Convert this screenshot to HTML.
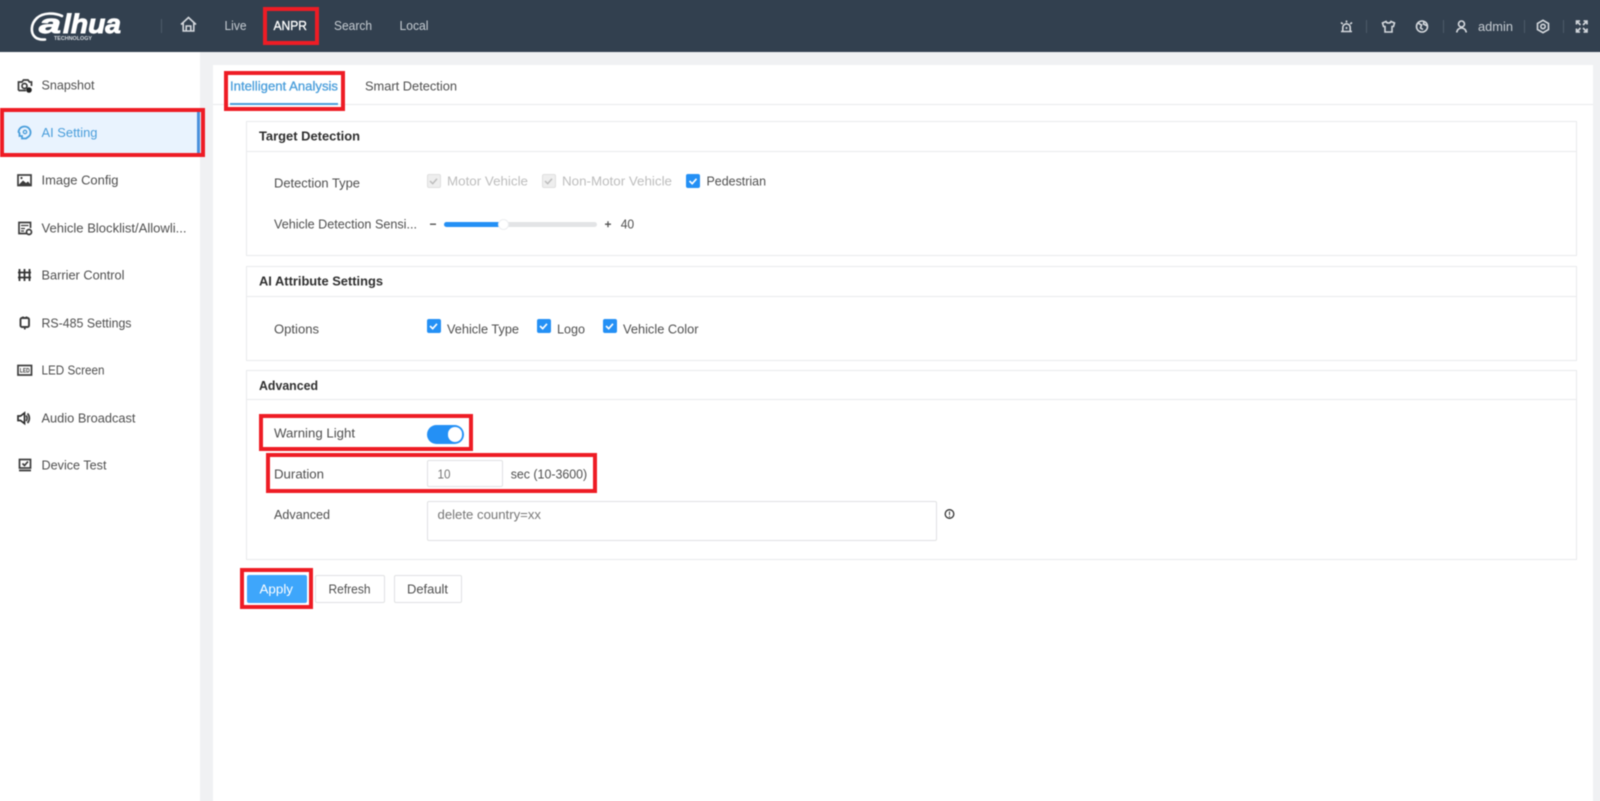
<!DOCTYPE html>
<html lang="en"><head><meta charset="utf-8"><title>ANPR - AI Setting</title>
<style>
html,body{margin:0;padding:0;width:1600px;height:801px;overflow:hidden;background:#fff}
#wrap{position:absolute;left:0;top:0;width:1600px;height:801px;overflow:hidden;contain:paint}
#root{position:absolute;left:-10px;top:-10px;width:1620px;height:821px;overflow:hidden;filter:blur(.5px);background:#f0f1f3}
#c{position:absolute;left:10px;top:10px;width:1600px;height:801px}
.b{position:absolute;box-sizing:border-box}
.panel{background:#fff;border:1px solid #e9ebed}
.line{background:#e9ebed;height:1px}
.red{border:4.500px solid #ee1c25}
.btn{background:#fff;border:1px solid #e0e1e3;border-radius:2px}
svg.o{position:absolute;left:0;top:0}
text{font-family:"Liberation Sans",sans-serif;font-size:13px;fill:#4f4f4f}
.n{fill:#c6ccd2}
.h{font-weight:700;fill:#2f2f2f;font-size:12.500px}
.d{fill:#bdbdbd}
.s{fill:none;stroke:#3c3c3c;stroke-width:1.700}
.w{fill:none;stroke:#d4d8dd;stroke-width:1.600}
.lg{font-weight:700;font-style:italic;fill:#fff;stroke:#fff;stroke-width:.9;font-size:27px}
</style></head><body>
<div id="wrap"><div id="root"><div id="c">
<div class="b" style="left:-10px;top:-10px;width:1620px;height:62px;background:#32404f"></div>
<div class="b" style="left:-10px;top:52px;width:210px;height:759px;background:#fff"></div>
<div class="b" style="left:213px;top:65px;width:1380px;height:746px;background:#fff"></div>
<div class="b line" style="left:213px;top:104px;width:1380px"></div>

<div class="b" style="left:0;top:112px;width:199px;height:42px;background:#e9f3fe"></div>
<div class="b" style="left:197px;top:112px;width:2.500px;height:42px;background:#4a90dc"></div>

<div class="b panel" style="left:246px;top:121px;width:1331px;height:135px"></div>
<div class="b line" style="left:247px;top:151px;width:1329px"></div>
<div class="b panel" style="left:246px;top:266px;width:1331px;height:95px"></div>
<div class="b line" style="left:247px;top:296px;width:1329px"></div>
<div class="b panel" style="left:246px;top:370px;width:1331px;height:190px"></div>
<div class="b line" style="left:247px;top:399px;width:1329px"></div>

<!-- slider -->
<div class="b" style="left:444px;top:222px;width:153px;height:5px;background:#e3e4e6;border-radius:3px"></div>
<div class="b" style="left:444px;top:222px;width:60px;height:5px;background:#2490f5;border-radius:3px"></div>
<div class="b" style="left:498px;top:218.500px;width:11px;height:11px;background:#fff;border-radius:50%;border:1px solid #eceef0"></div>

<!-- checkboxes -->
<div class="b" style="left:426.500px;top:174px;width:14px;height:14px;background:#eeeeee;border:1px solid #e0e0e0;border-radius:2px"></div>
<div class="b" style="left:541.500px;top:174px;width:14px;height:14px;background:#eeeeee;border:1px solid #e0e0e0;border-radius:2px"></div>
<div class="b" style="left:686px;top:174px;width:14px;height:14px;background:#2490f5;border-radius:2px"></div>
<div class="b" style="left:426.500px;top:319px;width:14px;height:14px;background:#2490f5;border-radius:2px"></div>
<div class="b" style="left:536.500px;top:319px;width:14px;height:14px;background:#2490f5;border-radius:2px"></div>
<div class="b" style="left:602.500px;top:319px;width:14px;height:14px;background:#2490f5;border-radius:2px"></div>

<!-- toggle -->
<div class="b" style="left:427px;top:425px;width:37px;height:18.500px;background:#2490f5;border-radius:10px"></div>
<div class="b" style="left:447.500px;top:427px;width:14.500px;height:14.500px;background:#fff;border-radius:50%"></div>

<!-- inputs -->
<div class="b" style="left:426.500px;top:460px;width:76.500px;height:27px;background:#fff;border:1px solid #e0e1e3;border-radius:2px"></div>
<div class="b" style="left:426.500px;top:500.500px;width:510px;height:40px;background:#fff;border:1px solid #e0e1e3;border-radius:2px"></div>

<!-- buttons -->
<div class="b" style="left:246.500px;top:575px;width:60px;height:27.500px;background:#3ea6fb;border-radius:2px"></div>
<div class="b btn" style="left:315px;top:575px;width:69.500px;height:27.500px"></div>
<div class="b btn" style="left:393.500px;top:575px;width:68px;height:27.500px"></div>

<!-- red highlight boxes -->
<div class="b red" style="left:263px;top:7px;width:56px;height:38px"></div>
<div class="b red" style="left:223.500px;top:71px;width:121.500px;height:40px"></div>
<div class="b red" style="left:0;top:108px;width:205px;height:49px"></div>
<div class="b red" style="left:259px;top:414px;width:214px;height:37px"></div>
<div class="b red" style="left:266px;top:453px;width:331px;height:40px"></div>
<div class="b red" style="left:240px;top:568px;width:73px;height:41px"></div>

<svg class="o" width="1600" height="801" viewBox="0 0 1600 801">
<!-- logo -->
<path d="M62 16C54 12.500 43 12.500 37 18 30.500 24 30.500 33 35 37 37.500 39.300 41 39.800 45 39.500" fill="none" stroke="#fff" stroke-width="2.600" stroke-linecap="round"/>
<text class="lg" x="39" y="33" textLength="22" lengthAdjust="spacingAndGlyphs">a</text>
<text class="lg" x="63" y="33" textLength="58" lengthAdjust="spacingAndGlyphs">lhua</text>
<text x="54" y="40" textLength="38" lengthAdjust="spacingAndGlyphs" style="font-size:5px;font-weight:700;fill:#d8dce0">TECHNOLOGY</text>

<rect x="161" y="19" width="1" height="14" fill="#4c5a68"/>
<path class="w" d="M181 24.500 188.500 17.500 196 24.500M183.200 23V31H193.800V23M186.200 31V26H190.800V31"/>
<text class="n" x="224.500" y="30" textLength="22" lengthAdjust="spacingAndGlyphs">Live</text>
<text x="273.500" y="30" textLength="33.500" lengthAdjust="spacingAndGlyphs" style="fill:#fff;stroke:#fff;stroke-width:.3">ANPR</text>
<text class="n" x="334" y="30" textLength="38" lengthAdjust="spacingAndGlyphs">Search</text>
<text class="n" x="399.500" y="30" textLength="29" lengthAdjust="spacingAndGlyphs">Local</text>

<!-- header right -->
<path class="w" d="M1341 31.500H1352M1342.800 31.500V27.500a3.700 3.700 0 0 1 7.400 0V31.500M1346.500 20.500V22.500M1341 22.500 1342.800 24M1352 22.500 1350.200 24M1346.500 27V29"/>
<rect x="1366" y="20" width="1" height="13" fill="#4c5a68"/>
<path class="w" d="M1386 21.500 1382.500 23 1383.500 26.500H1385V32H1392V26.500H1393.500L1394.500 23 1391 21.500C1390.500 23.500 1386.500 23.500 1386 21.500Z"/>
<circle class="w" cx="1422" cy="26.500" r="5.500"/>
<path class="w" d="M1418 23 1421.500 25 1420.500 28 1423 29.500M1424 21.500 1423.500 24 1427.500 26"/>
<rect x="1443" y="20" width="1" height="13" fill="#4c5a68"/>
<circle class="w" cx="1461.500" cy="24" r="3"/>
<path class="w" d="M1456.800 32.500c.4-6 9-6 9.400 0"/>
<text class="n" x="1478" y="31" textLength="35" lengthAdjust="spacingAndGlyphs">admin</text>
<rect x="1524" y="20" width="1" height="13" fill="#4c5a68"/>
<path class="w" d="M1543 20.300 1548.500 23.500V29.500L1543 32.700 1537.500 29.500V23.500Z"/>
<circle class="w" cx="1543" cy="26.500" r="2.200"/>
<rect x="1563" y="20" width="1" height="13" fill="#4c5a68"/>
<path class="w" d="M1576.500 24.500V21H1580M1577 21.500 1580.500 25M1587 24.500V21H1583.500M1586.500 21.500 1583 25M1576.500 28.500V32H1580M1577 31.500 1580.500 28M1587 28.500V32H1583.500M1586.500 31.500 1583 28"/>

<!-- tabs -->
<text x="230" y="90.300" textLength="108" lengthAdjust="spacingAndGlyphs" style="fill:#4a9edb;stroke:#4a9edb;stroke-width:.3">Intelligent Analysis</text>
<rect x="230" y="103" width="108" height="2" fill="#4a9edb"/>
<text x="365" y="90.300" textLength="92" lengthAdjust="spacingAndGlyphs">Smart Detection</text>

<!-- sidebar icons -->
<path class="s" d="M18.500 90.500V82H22L23.500 80H28L29.500 82H31.500V86M18.500 90.500H26"/>
<circle class="s" cx="24.500" cy="86" r="2.500"/>
<circle cx="29" cy="90" r="2.800" fill="#222"/>
<path d="M24.500 126.500a6 6 0 0 1 5.500 8.500c-1 2-3 2.500-4 3.500H22V136h-2.500v-3l-1-1c.2-3 2.500-5.500 6-5.500Z" fill="none" stroke="#4a9edb" stroke-width="1.800"/>
<circle cx="25" cy="132" r="1.700" fill="none" stroke="#4a9edb" stroke-width="1.300"/>
<rect class="s" x="18" y="175" width="13" height="10.500"/>
<path d="M18.500 185 23 180.500 26 183 28 181.500 31 185Z" fill="#3c3c3c"/>
<circle cx="21.500" cy="178" r="1.100" fill="#3c3c3c"/>
<path class="s" d="M27 233.500H19V222.500H30.500V228" />
<path d="M21 225.500H28.500M21 228.500H25M21 231H24" fill="none" stroke="#3c3c3c" stroke-width="1.200"/>
<circle class="s" cx="29" cy="232" r="2.500"/>
<path d="M19.500 269v12M24.500 269v12M29.500 269v12M18 272.500H31M18 277.500H31" fill="none" stroke="#333" stroke-width="1.800"/>
<rect class="s" x="20.500" y="318" width="8.500" height="9" rx="1.500" style="stroke-width:1.900"/>
<path class="s" d="M23 316.500V318M26.500 316.500V318M24.800 327V329.500"/>
<rect class="s" x="18" y="365.500" width="13.500" height="9.500"/>
<text x="19.800" y="372.500" textLength="10" lengthAdjust="spacingAndGlyphs" style="font-size:6px;font-weight:700;fill:#3c3c3c">LED</text>
<path d="M18 416H20.500L24.500 413V423.500L20.500 420.500H18Z" fill="none" stroke="#2e2e2e" stroke-width="1.700"/>
<path class="s" d="M26 415.500a4 4 0 0 1 0 5.500M27.500 413.500a7 7 0 0 1 0 9.500"/>
<rect class="s" x="19.500" y="459.500" width="11" height="8.500"/>
<path class="s" d="M22.500 463.500 24.500 465.500 28 461.500M19 470.500H31"/>

<!-- sidebar text -->
<text x="41.500" y="89.500" textLength="53" lengthAdjust="spacingAndGlyphs">Snapshot</text>
<text x="41.500" y="137" textLength="56" lengthAdjust="spacingAndGlyphs" style="fill:#4a9edb">AI Setting</text>
<text x="41.500" y="184.500" textLength="77" lengthAdjust="spacingAndGlyphs">Image Config</text>
<text x="41.500" y="232.500" textLength="145" lengthAdjust="spacingAndGlyphs">Vehicle Blocklist/Allowli...</text>
<text x="41.500" y="279.500" textLength="83" lengthAdjust="spacingAndGlyphs">Barrier Control</text>
<text x="41.500" y="327.500" textLength="90" lengthAdjust="spacingAndGlyphs">RS-485 Settings</text>
<text x="41.500" y="374.500" textLength="63" lengthAdjust="spacingAndGlyphs">LED Screen</text>
<text x="41.500" y="422.500" textLength="94" lengthAdjust="spacingAndGlyphs">Audio Broadcast</text>
<text x="41.500" y="469.500" textLength="65" lengthAdjust="spacingAndGlyphs">Device Test</text>

<!-- headings -->
<text class="h" x="259" y="140.500" textLength="101" lengthAdjust="spacingAndGlyphs">Target Detection</text>
<text class="h" x="259" y="285.500" textLength="124" lengthAdjust="spacingAndGlyphs">AI Attribute Settings</text>
<text class="h" x="259" y="390" textLength="59" lengthAdjust="spacingAndGlyphs">Advanced</text>

<!-- form text -->
<text x="274" y="187.500" textLength="86" lengthAdjust="spacingAndGlyphs">Detection Type</text>
<text class="d" x="447" y="185.500" textLength="81" lengthAdjust="spacingAndGlyphs">Motor Vehicle</text>
<text class="d" x="562" y="185.500" textLength="110" lengthAdjust="spacingAndGlyphs">Non-Motor Vehicle</text>
<text x="706.500" y="185.500" textLength="59.500" lengthAdjust="spacingAndGlyphs">Pedestrian</text>
<path d="M430 181 432.700 183.700 437 178.800M545 181 547.700 183.700 552 178.800" fill="none" stroke="#bdbdbd" stroke-width="1.500"/>
<path d="M689.500 181 692.200 183.700 696.500 178.800M430 326 432.700 328.700 437 323.800M540 326 542.700 328.700 547 323.800M606 326 608.700 328.700 613 323.800" fill="none" stroke="#fff" stroke-width="1.600"/>
<text x="274" y="228.500" textLength="143" lengthAdjust="spacingAndGlyphs">Vehicle Detection Sensi...</text>
<rect x="430" y="223.500" width="6" height="1.400" fill="#555"/>
<path d="M605 224.200H611M608 221.200V227.200" stroke="#555" stroke-width="1.300"/>
<text x="620.700" y="228.500" textLength="13.500" lengthAdjust="spacingAndGlyphs">40</text>
<text x="274" y="333.500" textLength="45" lengthAdjust="spacingAndGlyphs">Options</text>
<text x="447" y="333.500" textLength="72" lengthAdjust="spacingAndGlyphs">Vehicle Type</text>
<text x="557" y="333.500" textLength="28" lengthAdjust="spacingAndGlyphs">Logo</text>
<text x="623" y="333.500" textLength="75.500" lengthAdjust="spacingAndGlyphs">Vehicle Color</text>
<text x="274" y="437.500" textLength="81" lengthAdjust="spacingAndGlyphs">Warning Light</text>
<text x="274" y="478.500" textLength="50" lengthAdjust="spacingAndGlyphs">Duration</text>
<text x="437.500" y="478.500" textLength="13" lengthAdjust="spacingAndGlyphs" style="fill:#777">10</text>
<text x="510.700" y="478.500" textLength="76.500" lengthAdjust="spacingAndGlyphs">sec (10-3600)</text>
<text x="274" y="519" textLength="56" lengthAdjust="spacingAndGlyphs">Advanced</text>
<text x="437.500" y="519" textLength="103.500" lengthAdjust="spacingAndGlyphs" style="fill:#777">delete country=xx</text>
<circle cx="949.500" cy="514" r="4.300" fill="none" stroke="#333" stroke-width="1.300"/>
<path d="M949.500 511.500V515M949.500 516V517" stroke="#333" stroke-width="1"/>

<text x="259.500" y="593.500" textLength="33.500" lengthAdjust="spacingAndGlyphs" style="fill:#fff;font-size:12.500px">Apply</text>
<text x="328.500" y="593.500" textLength="42" lengthAdjust="spacingAndGlyphs" style="font-size:12.500px">Refresh</text>
<text x="407" y="593.500" textLength="41" lengthAdjust="spacingAndGlyphs" style="font-size:12.500px">Default</text>
</svg>
</div></div></div>
</body></html>
